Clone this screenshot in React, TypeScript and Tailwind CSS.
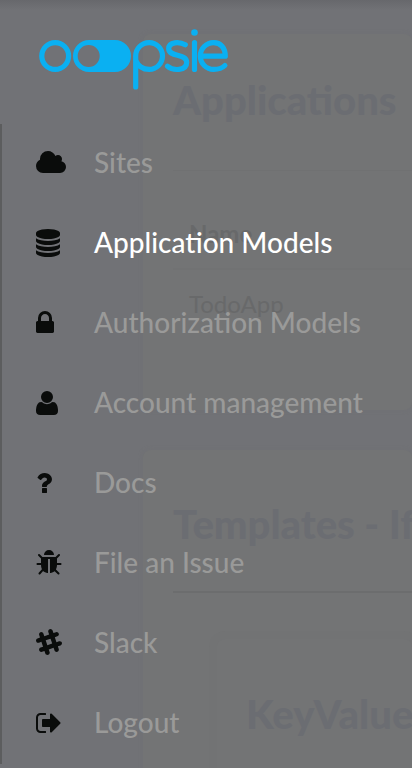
import React from "react";

type Item = { label: string; box: string; width: string; d: string; active?: boolean };

const items: Item[] = [
  {
    label: "Sites",
    box: "64 0 1920 1792",
    width: "w-[30px]",
    d: "M1984 1152q0 159-112.5 271.5t-271.5 112.5h-1088q-185 0-316.5-131.5t-131.5-316.5q0-132 71-241.5t187-163.5q-2-28-2-43 0-212 150-362t362-150q158 0 286.5 88t187.5 230q70-62 166-62 106 0 181 75t75 181q0 75-41 138 129 30 213 134.5t84 239.5z",
  },
  {
    label: "Application Models",
    box: "128 0 1536 1792",
    width: "w-6",
    active: true,
    d: "M896 768q237 0 443-43t325-127v170q0 69-103 128t-280 93.5-385 34.5-385-34.5-280-93.5-103-128v-170q119 84 325 127t443 43zm0 768q237 0 443-43t325-127v170q0 69-103 128t-280 93.5-385 34.5-385-34.5-280-93.5-103-128v-170q119 84 325 127t443 43zm0-384q237 0 443-43t325-127v170q0 69-103 128t-280 93.5-385 34.5-385-34.5-280-93.5-103-128v-170q119 84 325 127t443 43zm0-1152q208 0 385 34.5t280 93.5 103 128v128q0 69-103 128t-280 93.5-385 34.5-385-34.5-280-93.5-103-128v-128q0-69 103-128t280-93.5 385-34.5z",
  },
  {
    label: "Authorization Models",
    box: "320 0 1152 1792",
    width: "w-[18px]",
    d: "M640 768h512v-192q0-106-75-181t-181-75-181 75-75 181v192zm832 96v576q0 40-28 68t-68 28h-960q-40 0-68-28t-28-68v-576q0-40 28-68t68-28h32v-192q0-184 132-316t316-132 316 132 132 316v192h32q40 0 68 28t28 68z",
  },
  {
    label: "Account management",
    box: "192 0 1408 1792",
    width: "w-[22px]",
    d: "M1600 1405q0 120-73 189.5t-194 69.5h-874q-121 0-194-69.5t-73-189.5q0-53 3.5-103.5t14-109 26.5-108.5 43-97.5 62-81 85.5-53.5 111.5-20q9 0 42 21.5t74.5 48 108 48 133.5 21.5 133.5-21.5 108-48 74.5-48 42-21.5q61 0 111.5 20t85.5 53.5 62 81 43 97.5 26.5 108.5 14 109 3.5 103.5zm-320-893q0 159-112.5 271.5t-271.5 112.5-271.5-112.5-112.5-271.5 112.5-271.5 271.5-112.5 271.5 112.5 112.5 271.5z",
  },
  {
    label: "Docs",
    box: "384 0 1024 1792",
    width: "w-4",
    d: "M1088 1256v240q0 16-12 28t-28 12h-240q-16 0-28-12t-12-28v-240q0-16 12-28t28-12h240q16 0 28 12t12 28zm316-600q0 54-15.5 101t-35 76.5-55 59.5-57.5 43.5-61 35.5q-41 23-68.5 65t-27.5 67q0 17-12 32.5t-28 15.5h-240q-15 0-25.5-18.5t-10.5-37.5v-45q0-83 65-156.5t143-108.5q59-27 84-56t25-76q0-42-46.5-74t-107.5-32q-65 0-108 29-35 25-107 115-13 16-31 16-12 0-25-8l-164-125q-13-10-15.5-25t5.5-28q160-266 464-266 80 0 161 31t146 83 106 127.5 41 158.5z",
  },
  {
    label: "File an Issue",
    box: "64 0 1664 1792",
    width: "w-[26px]",
    d: "M1696 960q0 26-19 45t-45 19h-224q0 171-67 290l208 209q19 19 19 45t-19 45q-18 19-45 19t-45-19l-198-197q-5 5-15 13t-42 28.5-65 36.5-82 29-97 13v-896h-128v896q-51 0-101.5-13.5t-87-33-66-39-43.5-32.5l-15-14-183 207q-20 21-48 21-24 0-43-16-19-18-20.5-44.5t15.5-46.5l202-227q-58-114-58-274h-224q-26 0-45-19t-19-45 19-45 45-19h224v-294l-173-173q-19-19-19-45t19-45 45-19 45 19l173 173h844l173-173q19-19 45-19t45 19 19 45-19 45l-173 173v294h224q26 0 45 19t19 45zm-480-576h-640q0-133 93.5-226.5t226.5-93.5 226.5 93.5 93.5 226.5z",
  },
  {
    label: "Slack",
    box: "64 0 1664 1792",
    width: "w-[26px]",
    d: "M1583 776q62 0 103.5 40.5t41.5 101.5q0 97-93 130l-172 59 56 167q7 21 7 47 0 59-42 102t-101 43q-47 0-85.5-27t-53.5-72l-55-165-310 106 55 164q8 24 8 47 0 59-42 102t-102 43q-47 0-85-27t-53-72l-55-163-153 53q-29 9-50 9-61 0-101.5-40t-40.5-101q0-47 27.5-85t71.5-53l156-53-105-313-156 54q-26 8-48 8-60 0-101-40.5t-41-100.5q0-47 27.5-85t71.5-53l157-53-53-159q-8-24-8-47 0-60 42-102.5t102-42.5q47 0 85 27t53 72l54 160 310-105-54-160q-8-24-8-47 0-59 42.5-102t101.5-43q47 0 85.5 27.5t53.5 71.5l53 161 162-55q21-6 43-6 60 0 102.5 39.5t42.5 98.5q0 45-30 81.5t-74 51.5l-157 54 105 316 164-56q24-8 46-8zm-794 262l310-105-105-315-310 107z",
  },
  {
    label: "Logout",
    box: "64 0 1600 1792",
    width: "w-[25px]",
    d: "M704 1440q0 4 1 20t.5 26.5-3 23.5-10 19.5-20.5 6.5h-320q-119 0-203.5-84.5t-84.5-203.5v-704q0-119 84.5-203.5t203.5-84.5h320q13 0 22.5 9.5t9.5 22.5q0 4 1 20t.5 26.5-3 23.5-10 19.5-20.5 6.5h-320q-66 0-113 47t-47 113v704q0 66 47 113t113 47h312l11.5 1 11.5 3 8 5.5 7 9 2 13.5zm928-544q0 26-19 45l-544 544q-19 19-45 19t-45-19-19-45v-288h-448q-26 0-45-19t-19-45v-384q0-26 19-45t45-19h448v-288q0-26 19-45t45-19 45 19l544 544q19 19 19 45z",
  },
];

function Logo() {
  return (
    <svg
      viewBox="0 0 192 62"
      className="h-[62px] w-[192px]"
      fill="none"
      stroke="#0ab0f2"
      strokeWidth="5.2"
      strokeLinecap="round"
      strokeLinejoin="round"
      role="img"
      aria-label="oopsie"
    >
      <circle cx="17.2" cy="28" r="13.4" />
      <path
        fill="#0ab0f2"
        stroke="none"
        fillRule="evenodd"
        d="M51 12H77a16 16 0 0 1 0 32H51a16 16 0 0 1 0-32zM50.7 17a11 11 0 1 0 0 22 11 11 0 1 0 0-22z"
      />
      <path d="M97.7 59V28a13.4 13.4 0 1 1 13.4 13.4c-6 0-11-3.5-13.4-9" />
      <path d="M147.3 16.8C141.500 13.500 130.700 13.500 130.700 20.800c0 8.700 18 4.200 18 13.500 0 9-14 8.500-19.200 4" />
      <path d="M156.500 14.600v26.800" />
      <circle cx="156.500" cy="4.500" r="3.300" fill="#0ab0f2" stroke="none" />
      <path d="M163.800 28.200h23.500c0-8.500-4.800-13.600-11.600-13.600a13.400 13.400 0 1 0 0 26.800c5 0 8.500-1.300 11.200-3.900" />
    </svg>
  );
}

const heading = "text-[40px] leading-[48px] font-black whitespace-nowrap text-[#6b6d72]";
const card = "rounded-lg bg-[#737475] shadow-[0_0_4px_#707174]";

function Page() {
  return (
    <main className="ml-[143px] flex flex-col gap-10 pt-[34px]">
      <section className={`${card} h-[376px] pt-[42px] pl-[30px]`}>
        <h1 className={heading}>Applications</h1>
        <div className="mt-[46px] border-t border-[#707172] pt-10">
          <table className="w-full text-left text-2xl text-[#68696a]">
            <thead>
              <tr className="border-b-2 border-[#717273]">
                <th className="h-[58px] pb-3 pl-4 font-bold">Name</th>
              </tr>
            </thead>
            <tbody>
              <tr>
                <td className="h-[72px] pb-1 pl-4">TodoApp</td>
              </tr>
            </tbody>
          </table>
        </div>
      </section>
      <section className={`${card} pt-[50px] pl-[30px]`}>
        <h1 className={heading}>Templates - If you</h1>
        <div className="mt-[43px] border-t-2 border-[#6c6d6e] pt-[46px] pl-11">
          <div className="h-[300px] rounded-lg bg-[#737475] pt-[51px] pl-[29px] shadow-[0_0_0_8px_#727374]">
            <h2 className={heading}>KeyValue</h2>
          </div>
        </div>
      </section>
    </main>
  );
}

export default function App() {
  return (
    <div className="relative h-screen overflow-hidden bg-[#717276] font-['Lato',sans-serif]">
      <Page />
      <aside className="absolute inset-0 bg-linear-to-b from-[#67686c] to-transparent to-[10px]">
        <a href="#" className="block pt-7 pl-[38px]">
          <Logo />
        </a>
        <nav className="mt-[34px] flex flex-col border-l-2 border-[#5c5d5e]">
          {items.map((item) => (
            <a
              key={item.label}
              href="#"
              className={`flex h-20 items-center pb-0.5 pl-[34px] text-[28px] font-medium whitespace-nowrap ${
                item.active ? "text-white" : "text-[#9a9a99]"
              }`}
            >
              <span className="w-[58px] shrink-0">
                <svg viewBox={item.box} className={`h-7 ${item.width}`} fill="#0a0c0b" aria-hidden="true">
                  <path d={item.d} />
                </svg>
              </span>
              <span className="pb-0.5">{item.label}</span>
            </a>
          ))}
        </nav>
      </aside>
    </div>
  );
}
